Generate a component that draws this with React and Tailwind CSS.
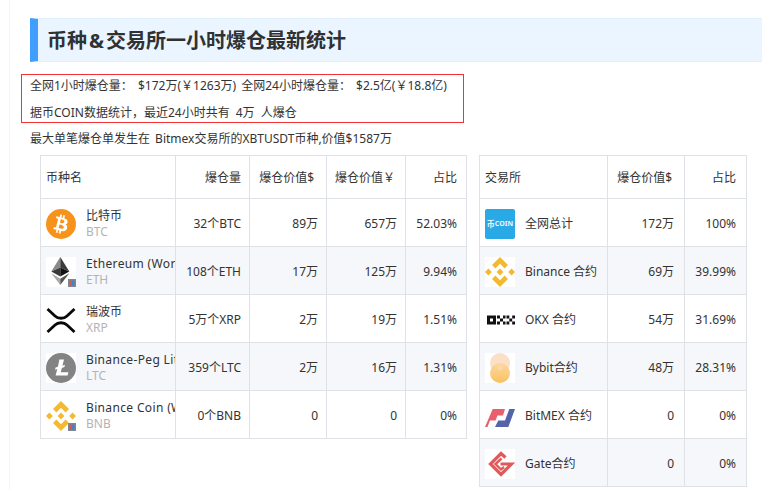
const coins = [
  { icon: 'btc', name: '比特币', sym: 'BTC', qty: '32个BTC', usd: '89万', cny: '657万', pct: '52.03%' },
  { icon: 'eth', name: 'Ethereum (Wormhole)', latin: true, sym: 'ETH', qty: '108个ETH', usd: '17万', cny: '125万', pct: '9.94%' },
  { icon: 'xrp', name: '瑞波币', sym: 'XRP', qty: '5万个XRP', usd: '2万', cny: '19万', pct: '1.51%' },
  { icon: 'ltc', name: 'Binance-Peg Litecoin', latin: true, sym: 'LTC', qty: '359个LTC', usd: '2万', cny: '16万', pct: '1.31%' },
  { icon: 'bnb', name: 'Binance Coin (Wormhole)', latin: true, sym: 'BNB', qty: '0个BNB', usd: '0', cny: '0', pct: '0%' },
]

const exchanges = [
  { icon: 'coin', name: '全网总计', usd: '172万', pct: '100%' },
  { icon: 'bnbx', name: 'Binance 合约', usd: '69万', pct: '39.99%' },
  { icon: 'okx', name: 'OKX 合约', usd: '54万', pct: '31.69%' },
  { icon: 'bybit', name: 'Bybit合约', usd: '48万', pct: '28.31%' },
  { icon: 'bitmex', name: 'BitMEX 合约', usd: '0', pct: '0%' },
  { icon: 'gate', name: 'Gate合约', usd: '0', pct: '0%' },
]

function Badge() {
  return (
    <g>
      <rect x="22" y="22" width="8" height="8" fill="#7d8794" />
      <rect x="23.5" y="23.5" width="2.2" height="5" fill="#d9534f" />
      <rect x="26.2" y="23.5" width="2.2" height="5" fill="#3f7fd0" />
    </g>
  )
}

function BnbMark() {
  return (
    <g fill="#f3ba2f">
      <path d="M15 0L23 8L19.6 11.4L15 6.8L10.4 11.4L7 8Z" />
      <path d="M15 30L23 22L19.6 18.6L15 23.2L10.4 18.6L7 22Z" />
      <path d="M15 11.6L18.4 15L15 18.4L11.6 15Z" />
      <path d="M3.4 11.6L6.8 15L3.4 18.4L0 15Z" />
      <path d="M26.6 11.6L30 15L26.6 18.4L23.2 15Z" />
    </g>
  )
}

function Icon({ type }) {
  if (type === 'coin') {
    return (
      <div className="flex h-[30px] w-[30px] shrink-0 items-center justify-center rounded-[2px] bg-[#29a9e6] font-bold leading-none text-white/90">
        <span className="text-[8px]">币</span>
        <span className="text-[7px]">COIN</span>
      </div>
    )
  }
  return (
    <svg width="30" height="30" viewBox="0 0 30 30" className="shrink-0 bg-white">
      {type === 'btc' && (
        <g>
          <circle cx="15" cy="15" r="15" fill="#f7931a" />
          <path
            fill="#fff"
            d="M21.6 13c.3-2-1.2-3-3.3-3.8l.7-2.7-1.6-.4-.7 2.7-1.3-.3.7-2.7-1.7-.4-.7 2.7-3.3-.8-.4 1.8 1.2.3c.7.2.8.6.8 1l-1.9 7.6c-.1.2-.3.6-.9.4l-1.2-.3-.8 1.9 3.3.8-.7 2.8 1.6.4.7-2.7 1.3.3-.7 2.7 1.7.4.7-2.8c2.9.6 5 .3 5.9-2.3.7-2.1 0-3.3-1.5-4.1 1.1-.2 1.9-1 2.1-2.5zm-3.8 5.4c-.5 2.1-4 1-5.2.7l.9-3.7c1.1.3 4.8.8 4.3 3zm.5-5.4c-.5 1.9-3.4.9-4.3.7l.8-3.4c1 .2 4 .7 3.5 2.7z"
          />
        </g>
      )}
      {type === 'eth' && (
        <g>
          <path d="M14.3 0L5.3 14.4L14.3 10.4Z" fill="#8a8a8a" />
          <path d="M14.3 0L23.3 14.4L14.3 10.4Z" fill="#3c3c3c" />
          <path d="M5.3 14.4L14.3 10.4V19.6Z" fill="#3a3a3a" />
          <path d="M23.3 14.4L14.3 10.4V19.6Z" fill="#141414" />
          <path d="M5.3 16.2L14.3 21.8V28Z" fill="#a8a8a8" />
          <path d="M23.3 16.2L14.3 21.8V28Z" fill="#555" />
          <Badge />
        </g>
      )}
      {type === 'xrp' && (
        <g fill="none" stroke="#0a0a0a" strokeWidth="2.8">
          <path d="M1.5 4L9 11C12 14 18 14 21 11L28.5 4" />
          <path d="M1.5 27L9 20C12 17 18 17 21 20L28.5 27" />
        </g>
      )}
      {type === 'ltc' && (
        <g>
          <circle cx="15" cy="15" r="15" fill="#838383" />
          <path fill="#fff" d="M13.4 6.5H18L16.4 12.7L19 11.7L18.4 14L15.8 15L14.8 19.2H22.4L21.6 22.5H9.6L11.3 15.9L9 16.8L9.6 14.6L11.9 13.7Z" />
        </g>
      )}
      {type === 'bnb' && (
        <g>
          <BnbMark />
          <Badge />
        </g>
      )}
      {type === 'bnbx' && <BnbMark />}
      {type === 'okx' && (
        <g fill="#111">
          <path d="M2 10.5H11V19.5H2ZM5 13.5V16.5H8V13.5Z" fillRule="evenodd" />
          <rect x="12" y="10.5" width="3" height="3" />
          <rect x="12" y="16.5" width="3" height="3" />
          <rect x="15" y="13.5" width="3" height="3" />
          <rect x="18" y="10.5" width="2.5" height="3" />
          <rect x="18" y="16.5" width="2.5" height="3" />
          <rect x="21.5" y="10.5" width="2.8" height="3" />
          <rect x="27.2" y="10.5" width="2.8" height="3" />
          <rect x="24.3" y="13.5" width="2.9" height="3" />
          <rect x="21.5" y="16.5" width="2.8" height="3" />
          <rect x="27.2" y="16.5" width="2.8" height="3" />
        </g>
      )}
      {type === 'bybit' && (
        <g>
          <defs>
            <linearGradient id="by" x1="0" y1="0" x2="0" y2="1">
              <stop offset="0" stopColor="#fcd79e" />
              <stop offset="1" stopColor="#fbb84a" />
            </linearGradient>
          </defs>
          <circle cx="15" cy="10" r="10" fill="#fbdfc6" />
          <circle cx="15" cy="20" r="10" fill="url(#by)" opacity="0.9" />
          <path d="M15 11.5L18.5 15L15 18.5L11.5 15Z" fill="#fbd9a4" />
        </g>
      )}
      {type === 'bitmex' && (
        <g>
          <path d="M0 26L7.7 8H20L18 14.500H12.500L10.500 19.500H5L2.500 26Z" fill="#e8606c" />
          <path d="M10 26L13.300 19.500H20L24.300 8H30L23.300 26Z" fill="#5563ab" />
        </g>
      )}
      {type === 'gate' && (
        <g fill="none" stroke="#e05a5a">
          <path d="M20.500 8.500L16 4.500L5.500 15L16 25.500L26.500 15H15.500" strokeWidth="3.200" />
          <path d="M16.500 9.500L10.500 15L16 20.500L19 18" strokeWidth="2.400" />
        </g>
      )}
    </svg>
  )
}

const cell = 'border border-[#dee2e6] pt-[2px] text-right font-normal'

function App() {
  return (
    <div
      className="h-[490px] w-[762px] overflow-hidden bg-white text-xs text-[#333]"
      style={{ fontFamily: '"Noto Sans", "Noto Sans CJK SC", sans-serif' }}
    >
      <div className="ml-[9px] h-full border-l border-[#f6f6f6] pt-[18px]">
        <div className="ml-5 flex h-[44px] items-center border-y border-[#deeefb] border-l-8 border-l-[#409eff] bg-[#ebf5ff] pl-[9px] pt-[2px]">
          <h1 className="text-xl font-bold text-[#303133]">
            币种<span className="mx-[2px]">&amp;</span>交易所一小时爆仓最新统计
          </h1>
        </div>

        <div className="ml-[11px] mt-3 h-[49px] w-[443px] border border-[#f33333] pl-2 pt-0.5">
          <div className="leading-[18px] [word-spacing:2px]">全网1小时爆仓量： $172万(￥1263万) 全网24小时爆仓量： $2.5亿(￥18.8亿)</div>
          <div className="mt-[9px] leading-[18px] [word-spacing:3px]">据币COIN数据统计，最近24小时共有 4万 人爆仓</div>
        </div>
        <div className="ml-5 mt-[7px] leading-[18px] [word-spacing:2px]">最大单笔爆仓单发生在 Bitmex交易所的XBTUSDT币种,价值$1587万</div>

        <div className="ml-[30px] mt-[7px] flex items-start gap-3">
          <table className="w-[427px] table-fixed border-collapse">
            <colgroup>
              <col className="w-[135px]" />
              <col className="w-[74px]" />
              <col className="w-[77px]" />
              <col className="w-[79px]" />
              <col className="w-[61px]" />
            </colgroup>
            <thead>
              <tr className="h-[43px]">
                <th className="border border-[#dee2e6] pl-[5px] pt-[2px] text-left font-normal">币种名</th>
                <th className={`${cell} pr-2`}>爆仓量</th>
                <th className={`${cell} pr-3`}>爆仓价值$</th>
                <th className={`${cell} pr-2.5`}>爆仓价值￥</th>
                <th className={`${cell} pr-[9px]`}>占比</th>
              </tr>
            </thead>
            <tbody>
              {coins.map((c, i) => (
                <tr key={c.sym} className={i % 2 ? 'h-12 bg-[#f5f7fa]' : 'h-12'}>
                  <td className="overflow-hidden border border-[#dee2e6] pl-[5px] pt-[2px]">
                    <div className="flex items-center gap-[10px]">
                      <Icon type={c.icon} />
                      <div className="whitespace-nowrap leading-4">
                        <div className={c.latin ? 'tracking-[0.35px]' : ''}>{c.name}</div>
                        <div className="text-[#b4b4b4]">{c.sym}</div>
                      </div>
                    </div>
                  </td>
                  <td className={`${cell} pr-2`}>{c.qty}</td>
                  <td className={`${cell} pr-2`}>{c.usd}</td>
                  <td className={`${cell} pr-2`}>{c.cny}</td>
                  <td className={`${cell} pr-[9px]`}>{c.pct}</td>
                </tr>
              ))}
            </tbody>
          </table>

          <table className="w-[267px] table-fixed border-collapse">
            <colgroup>
              <col className="w-[128px]" />
              <col className="w-[77px]" />
              <col className="w-[62px]" />
            </colgroup>
            <thead>
              <tr className="h-[43px]">
                <th className="border border-[#dee2e6] pl-[5px] pt-[2px] text-left font-normal">交易所</th>
                <th className={`${cell} pr-3`}>爆仓价值$</th>
                <th className={`${cell} pr-[10px]`}>占比</th>
              </tr>
            </thead>
            <tbody>
              {exchanges.map((e, i) => (
                <tr key={e.name} className={i % 2 ? 'h-12 bg-[#f5f7fa]' : 'h-12'}>
                  <td className="overflow-hidden border border-[#dee2e6] pl-[5px] pt-[2px]">
                    <div className="flex items-center gap-[10px] whitespace-nowrap">
                      <Icon type={e.icon} />
                      <span>{e.name}</span>
                    </div>
                  </td>
                  <td className={`${cell} pr-2.5`}>{e.usd}</td>
                  <td className={`${cell} pr-[10px]`}>{e.pct}</td>
                </tr>
              ))}
            </tbody>
          </table>
        </div>
      </div>
    </div>
  )
}

export default App
